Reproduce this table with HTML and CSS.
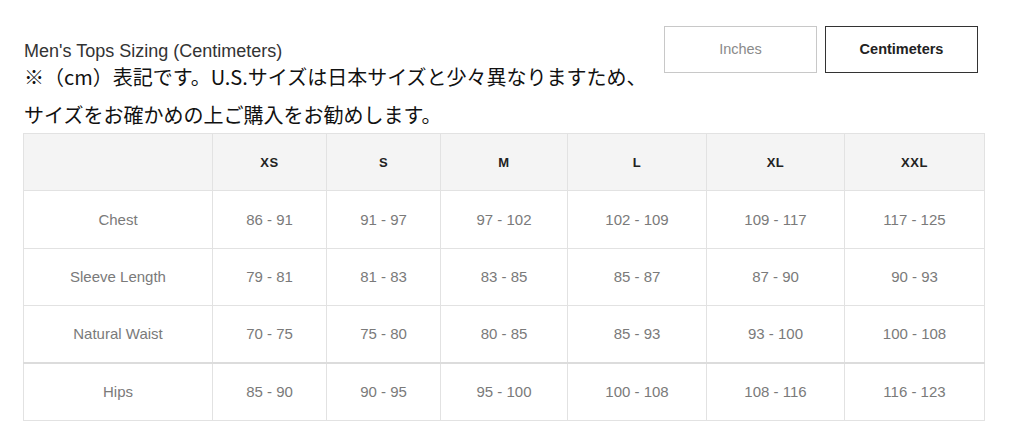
FILE: index.html
```html
<!DOCTYPE html>
<html lang="ja">
<head>
<meta charset="utf-8">
<title>Men's Tops Sizing</title>
<link rel="stylesheet" href="styles.css">
</head>
<body>
<div class="page">
  <div class="top">
    <div class="titles">
      <div class="title">Men's Tops Sizing (Centimeters)</div>
      <p class="note">※（cm）表記です。U.S.サイズは日本サイズと少々異なりますため、<br>サイズをお確かめの上ご購入をお勧めします。</p>
    </div>
    <div class="toggle">
      <button class="btn">Inches</button>
      <button class="btn active">Centimeters</button>
    </div>
  </div>
  <table class="sizes">
    <colgroup>
      <col class="c0"><col class="c1"><col class="c2"><col class="c3"><col class="c4"><col class="c5"><col class="c6">
    </colgroup>
    <thead>
      <tr class="head"><th></th><th>XS</th><th>S</th><th>M</th><th>L</th><th>XL</th><th>XXL</th></tr>
    </thead>
    <tbody>
      <tr class="r58"><td>Chest</td><td>86 - 91</td><td>91 - 97</td><td>97 - 102</td><td>102 - 109</td><td>109 - 117</td><td>117 - 125</td></tr>
      <tr class="r57"><td>Sleeve Length</td><td>79 - 81</td><td>81 - 83</td><td>83 - 85</td><td>85 - 87</td><td>87 - 90</td><td>90 - 93</td></tr>
      <tr class="r57"><td>Natural Waist</td><td>70 - 75</td><td>75 - 80</td><td>80 - 85</td><td>85 - 93</td><td>93 - 100</td><td>100 - 108</td></tr>
      <tr class="r58 last"><td>Hips</td><td>85 - 90</td><td>90 - 95</td><td>95 - 100</td><td>100 - 108</td><td>108 - 116</td><td>116 - 123</td></tr>
    </tbody>
  </table>
</div>
</body>
</html>
```
FILE: styles.css
```css
html, body {
  margin: 0;
  padding: 0;
  background: #fff;
}
.page {
  width: 961px;
  padding: 26px 0 0 23px;
  font-family: "Liberation Sans", Arial, sans-serif;
}
.top {
  display: flex;
  justify-content: space-between;
  align-items: flex-start;
}
.titles {
  padding-left: 1px;
}
.title {
  margin-top: 16px;
  font-size: 18px;
  line-height: 18px;
  color: #333;
}
.note {
  margin: -2px 0 0;
  font-family: "Noto Sans CJK JP", "Liberation Sans", sans-serif;
  font-size: 20px;
  line-height: 38px;
  color: #111;
}
.toggle {
  display: flex;
  gap: 8px;
  margin-right: 6px;
}
.btn {
  width: 153px;
  height: 47px;
  background: #fff;
  border: 1px solid #c8c8c8;
  color: #8a8a8a;
  font-family: "Liberation Sans", Arial, sans-serif;
  font-size: 14.5px;
  line-height: 1;
  padding: 0 0 1px;
}
.btn.active {
  border-color: #333;
  color: #222;
  font-weight: bold;
}
.sizes {
  width: 961px;
  margin-top: -1px;
  table-layout: fixed;
  border-collapse: collapse;
}
.c0 { width: 189px; }
.c1 { width: 114px; }
.c2 { width: 114px; }
.c3 { width: 127px; }
.c4 { width: 139px; }
.c5 { width: 138px; }
.c6 { width: 140px; }
.sizes th, .sizes td {
  border: 1px solid #e2e2e2;
  text-align: center;
  padding: 0;
}
.sizes th {
  background: #f4f4f4;
  color: #222;
  font-size: 13px;
  font-weight: bold;
  letter-spacing: 0.5px;
}
.head { height: 57px; }
.r57 { height: 57px; }
.r58 { height: 58px; }
.sizes td {
  color: #7a7a7a;
  font-size: 15px;
  padding-bottom: 1px;
}
.last td {
  border-top: 2px solid #dcdcdc;
}
```
